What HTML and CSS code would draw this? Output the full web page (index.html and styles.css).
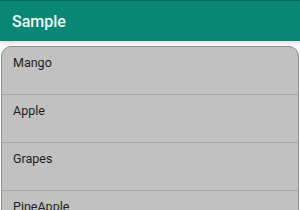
FILE: index.html
```html
<!DOCTYPE html>
<html lang="en">
<head>
    <meta charset="UTF-8">
    <title>Sample</title>
    <link rel="stylesheet" href="styles.css">
</head>
<body>
    <div class="toolbar">
        <span class="title">Sample</span>
    </div>

    <div class="list">
        <div class="item">Mango</div>
        <div class="item">Apple</div>
        <div class="item">Grapes</div>
        <div class="item">PineApple</div>
    </div>
</body>
</html>
```
FILE: styles.css
```css
body {
    margin: 0;
    font-family: Roboto, 'Noto Sans', sans-serif;
    background: #ffffff;
    overflow: hidden;
}

.toolbar {
    height: 40px;
    background: #0a8677;
    border-top: 1px solid #07695d;
    display: flex;
    align-items: center;
    padding: 0 12px;
    box-shadow: 0 2px 4px rgba(0,0,0,0.15);
}

.title {
    color: #eef8f6;
    font-size: 16px;
    font-weight: 500;
}

.list {
    margin: 5px 1px 0 1px;
    background: #c1c1c1;
    border: 1px solid #8e8e8e;
    border-radius: 10px 10px 0 0;
}

.item {
    height: 48px;
    box-sizing: border-box;
    padding: 8px 11px 0 11px;
    font-size: 12.5px;
    line-height: 16px;
    color: #1e1e1e;
    border-bottom: 1px solid #a9a9a9;
}
```
